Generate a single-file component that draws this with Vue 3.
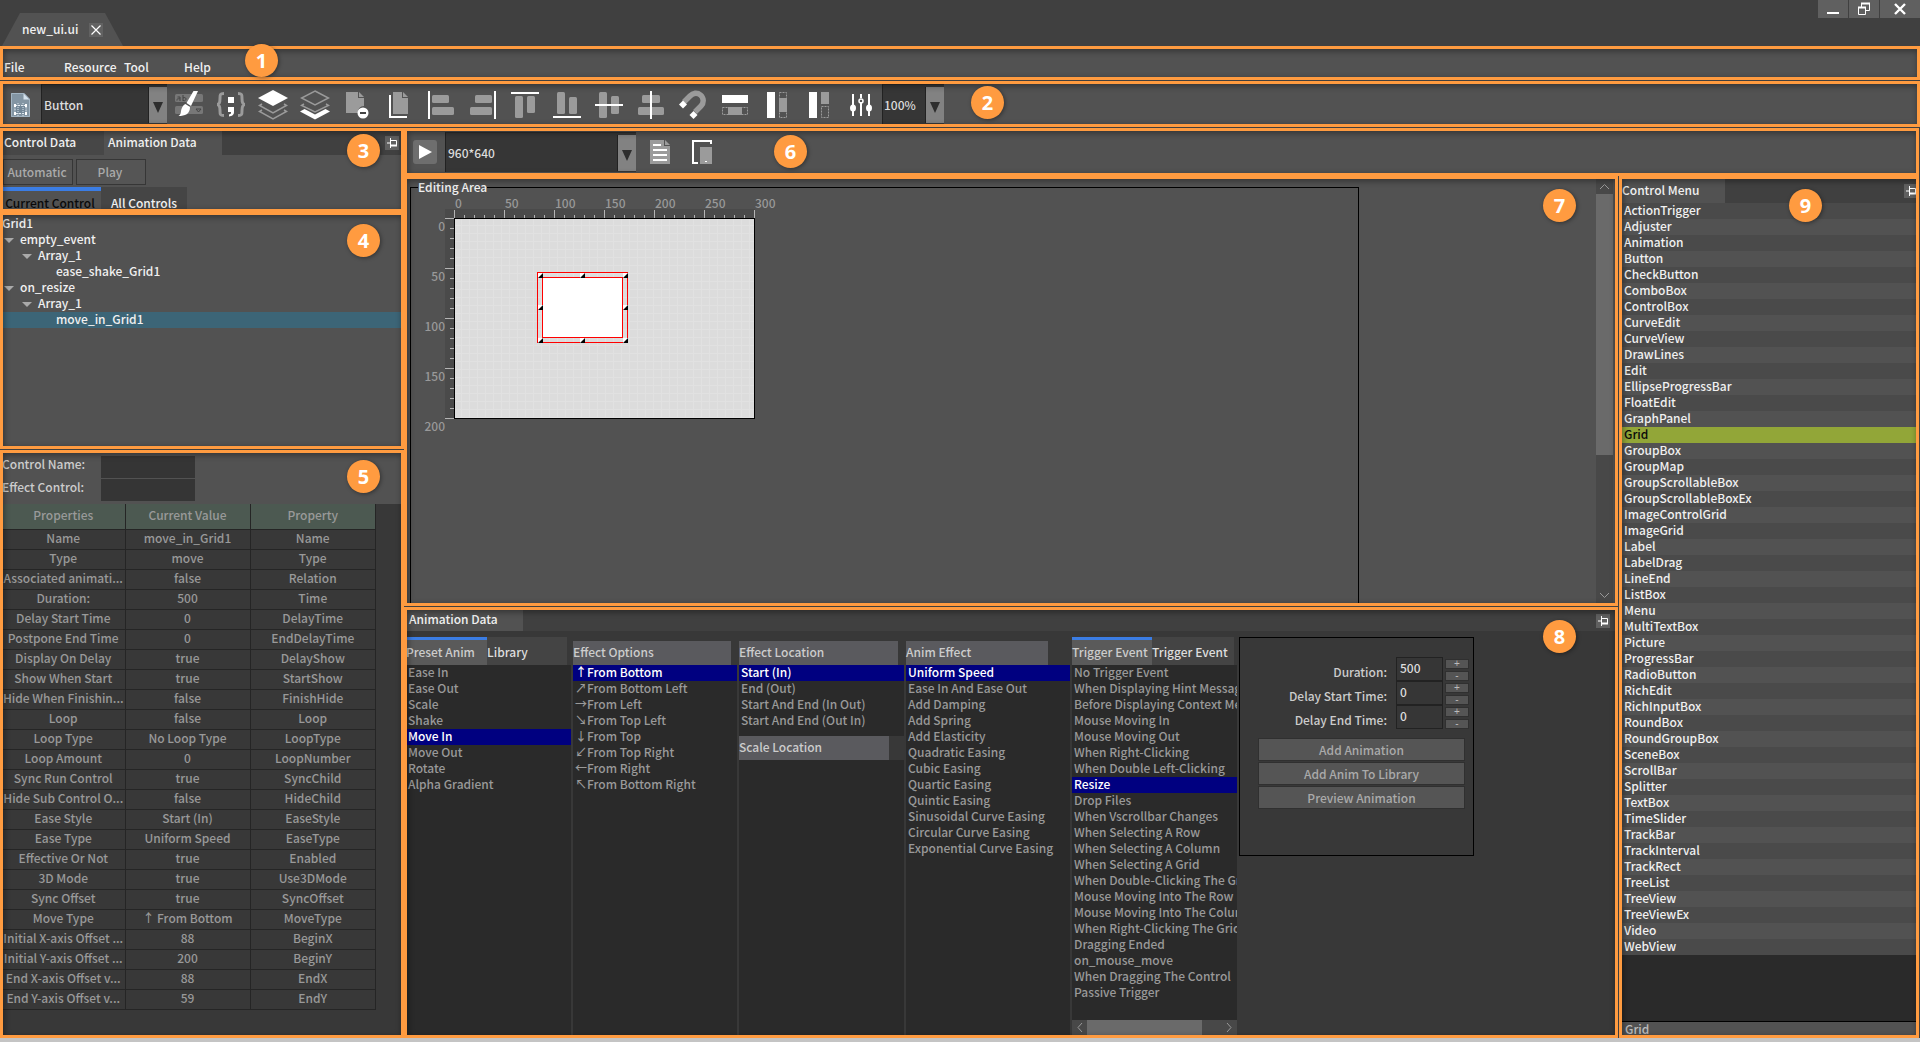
<script setup>
import { ref } from 'vue'

const menus = ['File', 'Resource', 'Tool', 'Help']

const tree = [
  { label: 'Grid1', level: 0 },
  { label: 'empty_event', level: 1, open: true },
  { label: 'Array_1', level: 2, open: true },
  { label: 'ease_shake_Grid1', level: 3 },
  { label: 'on_resize', level: 1, open: true },
  { label: 'Array_1', level: 2, open: true },
  { label: 'move_in_Grid1', level: 3, selected: true }
]

const properties = [
  ['Name', 'move_in_Grid1', 'Name'],
  ['Type', 'move', 'Type'],
  ['Associated animati...', 'false', 'Relation'],
  ['Duration:', '500', 'Time'],
  ['Delay Start Time', '0', 'DelayTime'],
  ['Postpone End Time', '0', 'EndDelayTime'],
  ['Display On Delay', 'true', 'DelayShow'],
  ['Show When Start', 'true', 'StartShow'],
  ['Hide When Finishin...', 'false', 'FinishHide'],
  ['Loop', 'false', 'Loop'],
  ['Loop Type', 'No Loop Type', 'LoopType'],
  ['Loop Amount', '0', 'LoopNumber'],
  ['Sync Run Control', 'true', 'SyncChild'],
  ['Hide Sub Control O...', 'false', 'HideChild'],
  ['Ease Style', 'Start (In)', 'EaseStyle'],
  ['Ease Type', 'Uniform Speed', 'EaseType'],
  ['Effective Or Not', 'true', 'Enabled'],
  ['3D Mode', 'true', 'Use3DMode'],
  ['Sync Offset', 'true', 'SyncOffset'],
  ['Move Type', '↑ From Bottom', 'MoveType'],
  ['Initial X-axis Offset ...', '88', 'BeginX'],
  ['Initial Y-axis Offset ...', '200', 'BeginY'],
  ['End X-axis Offset v...', '88', 'EndX'],
  ['End Y-axis Offset v...', '59', 'EndY']
]

const presets = ['Ease In', 'Ease Out', 'Scale', 'Shake', 'Move In', 'Move Out', 'Rotate', 'Alpha Gradient']
const directions = [
  { arrow: '↑', label: 'From Bottom' },
  { arrow: '↗', label: 'From Bottom Left' },
  { arrow: '→', label: 'From Left' },
  { arrow: '↘', label: 'From Top Left' },
  { arrow: '↓', label: 'From Top' },
  { arrow: '↙', label: 'From Top Right' },
  { arrow: '←', label: 'From Right' },
  { arrow: '↖', label: 'From Bottom Right' }
]
const locations = ['Start (In)', 'End (Out)', 'Start And End (In Out)', 'Start And End (Out In)']
const easings = [
  'Uniform Speed', 'Ease In And Ease Out', 'Add Damping', 'Add Spring', 'Add Elasticity', 'Quadratic Easing',
  'Cubic Easing', 'Quartic Easing', 'Quintic Easing', 'Sinusoidal Curve Easing', 'Circular Curve Easing',
  'Exponential Curve Easing'
]
const triggers = [
  'No Trigger Event', 'When Displaying Hint Message', 'Before Displaying Context Menu', 'Mouse Moving In',
  'Mouse Moving Out', 'When Right-Clicking', 'When Double Left-Clicking', 'Resize', 'Drop Files',
  'When Vscrollbar Changes', 'When Selecting A Row', 'When Selecting A Column', 'When Selecting A Grid',
  'When Double-Clicking The Grid', 'Mouse Moving Into The Row', 'Mouse Moving Into The Column',
  'When Right-Clicking The Grid', 'Dragging Ended', 'on_mouse_move', 'When Dragging The Control',
  'Passive Trigger'
]

const controls = [
  'ActionTrigger', 'Adjuster', 'Animation', 'Button', 'CheckButton', 'ComboBox', 'ControlBox', 'CurveEdit',
  'CurveView', 'DrawLines', 'Edit', 'EllipseProgressBar', 'FloatEdit', 'GraphPanel', 'Grid', 'GroupBox',
  'GroupMap', 'GroupScrollableBox', 'GroupScrollableBoxEx', 'ImageControlGrid', 'ImageGrid', 'Label',
  'LabelDrag', 'LineEnd', 'ListBox', 'Menu', 'MultiTextBox', 'Picture', 'ProgressBar', 'RadioButton',
  'RichEdit', 'RichInputBox', 'RoundBox', 'RoundGroupBox', 'SceneBox', 'ScrollBar', 'Splitter', 'TextBox',
  'TimeSlider', 'TrackBar', 'TrackInterval', 'TrackRect', 'TreeList', 'TreeView', 'TreeViewEx', 'Video',
  'WebView'
]

const preset = ref('Move In')
const direction = ref('From Bottom')
const location = ref('Start (In)')
const easing = ref('Uniform Speed')
const trigger = ref('Resize')
const control = ref('Grid')

const timings = ref([
  { id: 'duration', label: 'Duration:', value: '500' },
  { id: 'delay-start', label: 'Delay Start Time:', value: '0' },
  { id: 'delay-end', label: 'Delay End Time:', value: '0' }
])

// Ruler geometry: one unit is one pixel, a major tick every 50.
const rulerX = Array.from({ length: 31 }, (_, i) => i * 10)
const rulerY = Array.from({ length: 21 }, (_, i) => i * 10)
const handles = [[83, 54], [125, 54], [168, 54], [83, 86], [168, 86], [83, 119], [125, 119], [168, 119]]
</script>

<template>
  <div class="app">
    <header class="titlebar">
      <div class="doc-tab">
        <span>new_ui.ui</span>
        <button class="close-doc" aria-label="Close tab">
          <svg width="14" height="14" viewBox="0 0 14 14"><path d="M2.500 2.500l9 9M11.500 2.500l-9 9" stroke="#fff" stroke-width="1.200" /></svg>
        </button>
      </div>
      <div class="window-buttons">
        <button aria-label="Minimize"><svg width="14" height="14" viewBox="0 0 14 14"><path d="M1 10h12v2H1z" fill="#fff" /></svg></button>
        <button aria-label="Restore"><svg width="14" height="14" viewBox="0 0 14 14" fill="none" stroke="#fff"><path d="M1.500 5.500h7v7h-7zM4.500 5V1.500h8v7H9" /><path d="M1 5.500h8M4 1.500h9" stroke-width="2" /></svg></button>
        <button class="wide" aria-label="Close"><svg width="14" height="14" viewBox="0 0 14 14"><path d="M2 2l10 10M12 2L2 12" stroke="#fff" stroke-width="2.400" /></svg></button>
      </div>
    </header>

    <nav class="frame menubar">
      <a v-for="m in menus" :key="m" href="#">{{ m }}</a>
      <span class="badge b1">1</span>
    </nav>

    <section class="frame toolbar">
      <button class="tool first" aria-label="New from template">
        <svg width="30" height="30" viewBox="0 0 30 30">
          <path d="M6 3h13l6 6v18H6z" fill="#8395a3" /><path d="M18.500 3v6.500H25z" fill="#d5e2ec" /><path d="M6.500 3.500h12.500l5.500 6v17H6.500z" fill="none" stroke="#a3b5c3" />
          <path d="M10 15.500h11v8H10z" fill="#748898" stroke="#e4ebf0" stroke-dasharray="2 1" />
          <path d="M9 14h2v3H9zM20 14h2v3h-2zM9 22h2v3H9zM20 22h2v3h-2z" fill="#fff" /><path d="M13 13v13M18 13v13" stroke="#dce6ee" stroke-dasharray="1 1" />
        </svg>
      </button>
      <div class="combo kind">
        <select aria-label="Control type"><option>Button</option></select>
        <span class="drop" aria-hidden="true"></span>
      </div>
      <button class="tool" aria-label="Format painter">
        <svg width="30" height="30" viewBox="0 0 30 30">
          <rect x="1" y="4" width="28" height="8" rx="1.500" fill="#777" /><rect x="1" y="16" width="28" height="8" rx="1.500" fill="#777" />
          <path d="M3 10.500c-1-2 3-2 3-1.500M3.500 7h2.500v4M9 5v6M9 8c4-2 4 4 0 2.500M22 19h5l-2.500 3z" fill="none" stroke="#444" />
          <path d="M19.500 1h4.500L17 16l-4.500-3z" fill="#fff" /><path d="M11.500 14l4.500 3c0 7-5 9-11.500 9 3-2 2-4 3-7 .7-2 2-4.500 4-5z" fill="#fff" />
        </svg>
      </button>
      <button class="tool" aria-label="Code">
        <svg width="30" height="30" viewBox="0 0 30 30">
          <path d="M8 3.500c-4 0-4 1-4 5 0 4-.5 6-3 6 2.500 0 3 2 3 6 0 4 0 5 4 5M22 3.500c4 0 4 1 4 5 0 4 .5 6 3 6-2.500 0-3 2-3 6 0 4 0 5-4 5" fill="none" stroke="#9b9b9b" stroke-width="3" />
          <path d="M12 7h6v6h-6zM12 17h6v5c0 3-2 4-5 4.500v-2c2-.5 2-1 2-2.500h-3z" fill="#fff" />
        </svg>
      </button>
      <button class="tool" aria-label="Bring to front">
        <svg width="30" height="30" viewBox="0 0 30 30" fill="none" stroke="#9b9b9b" stroke-width="1.500">
          <path d="M4 14L1.500 15.500 15 23l13.500-7.500L26 14M4 20l-2.500 1.500L15 29l13.500-7.500L26 20" /><path d="M15 0l15 8-15 8L0 8z" fill="#fff" stroke="none" />
        </svg>
      </button>
      <button class="tool" aria-label="Send to back">
        <svg width="30" height="30" viewBox="0 0 30 30" fill="none" stroke="#9b9b9b" stroke-width="1.500">
          <path d="M15 1l13.500 7L15 15 1.500 8zM4 14l-2.500 1.500L15 22l13.500-6.500L26 14" /><path d="M0 21.500L4.500 19 15 24.500 25.500 19l4.500 2.500-15 8z" fill="#fff" stroke="none" />
        </svg>
      </button>
      <button class="tool" aria-label="Remove page">
        <svg width="30" height="30" viewBox="0 0 30 30">
          <path d="M4 2h12v6h6v8a6 6 0 0 0-6 7H4z" fill="#9b9b9b" /><path d="M17 2l5 5h-5z" fill="#9b9b9b" />
          <circle cx="21" cy="23" r="5.500" fill="#fff" /><path d="M18 22h6v2h-6z" fill="#444" />
        </svg>
      </button>
      <button class="tool" aria-label="Copy pages">
        <svg width="30" height="30" viewBox="0 0 30 30">
          <path d="M9 2h9v6h6v16H9z" fill="#9b9b9b" /><path d="M19 2l5 5h-5z" fill="#9b9b9b" /><path d="M6 5v22h17" fill="none" stroke="#fff" stroke-width="2" />
        </svg>
      </button>
      <button class="tool" aria-label="Align left">
        <svg width="30" height="30" viewBox="0 0 30 30"><path d="M2 1h2v28H2z" fill="#fff" /><rect x="6" y="5" width="17" height="8" rx="1.500" fill="#9b9b9b" /><rect x="6" y="17" width="22" height="8" rx="1.500" fill="#9b9b9b" /></svg>
      </button>
      <button class="tool" aria-label="Align right">
        <svg width="30" height="30" viewBox="0 0 30 30"><path d="M26 1h2v28h-2z" fill="#fff" /><rect x="7" y="5" width="17" height="8" rx="1.500" fill="#9b9b9b" /><rect x="2" y="17" width="22" height="8" rx="1.500" fill="#9b9b9b" /></svg>
      </button>
      <button class="tool" aria-label="Align top">
        <svg width="30" height="30" viewBox="0 0 30 30"><path d="M1 2h28v2H1z" fill="#fff" /><rect x="5" y="6" width="8" height="22" rx="1.500" fill="#9b9b9b" /><rect x="17" y="6" width="8" height="17" rx="1.500" fill="#9b9b9b" /></svg>
      </button>
      <button class="tool" aria-label="Align bottom">
        <svg width="30" height="30" viewBox="0 0 30 30"><path d="M1 26h28v2H1z" fill="#fff" /><rect x="5" y="2" width="8" height="22" rx="1.500" fill="#9b9b9b" /><rect x="17" y="7" width="8" height="17" rx="1.500" fill="#9b9b9b" /></svg>
      </button>
      <button class="tool" aria-label="Align middle">
        <svg width="30" height="30" viewBox="0 0 30 30"><rect x="5" y="2" width="8" height="26" rx="1.500" fill="#9b9b9b" /><rect x="17" y="6" width="8" height="18" rx="1.500" fill="#9b9b9b" /><path d="M1 14h28v2H1z" fill="#fff" /></svg>
      </button>
      <button class="tool" aria-label="Align center">
        <svg width="30" height="30" viewBox="0 0 30 30"><rect x="6" y="5" width="18" height="8" rx="1.500" fill="#9b9b9b" /><rect x="2" y="17" width="26" height="8" rx="1.500" fill="#9b9b9b" /><path d="M14 1h2v28h-2z" fill="#fff" /></svg>
      </button>
      <button class="tool" aria-label="Snap">
        <svg width="30" height="30" viewBox="0 0 30 30">
          <path d="M6 12l6-6c3-3 7-4 10.500-1s3.500 8 .5 11l-6 6" fill="none" stroke="#9b9b9b" stroke-width="5.500" />
          <path d="M5 10.500l4 4-4 4-4-4zM15.500 21l4 4-4 4-4-4z" fill="#fff" />
        </svg>
      </button>
      <button class="tool" aria-label="Same width">
        <svg width="30" height="30" viewBox="0 0 30 30"><path d="M2 5h26v8H2z" fill="#fff" /><path d="M2.500 17.500h25v7h-25z" fill="none" stroke="#9b9b9b" stroke-dasharray="2 1" /><path d="M8 17h14v8H8z" fill="#9b9b9b" /></svg>
      </button>
      <button class="tool" aria-label="Same height">
        <svg width="30" height="30" viewBox="0 0 30 30"><path d="M5 2h8v26H5z" fill="#fff" /><path d="M17.500 2.500h7v25h-7z" fill="none" stroke="#9b9b9b" stroke-dasharray="2 1" /><path d="M17 8h8v14h-8z" fill="#9b9b9b" /></svg>
      </button>
      <button class="tool" aria-label="Match height from top">
        <svg width="30" height="30" viewBox="0 0 30 30"><path d="M5 2h8v26H5z" fill="#fff" /><path d="M17 2h8v12h-8z" fill="#9b9b9b" /><path d="M17.500 16.500h7v11h-7z" fill="none" stroke="#9b9b9b" stroke-dasharray="2 1" /></svg>
      </button>
      <button class="tool" aria-label="Settings">
        <svg width="30" height="30" viewBox="0 0 30 30" fill="none" stroke="#fff">
          <path d="M7 4v22M15 12v14M15 4v4M23 4v22" stroke-width="2" /><circle cx="15" cy="11" r="2" stroke-width="1.500" /><ellipse cx="7" cy="18" rx="3" ry="3.500" fill="#fff" stroke="none" /><ellipse cx="23" cy="18" rx="3" ry="3.500" fill="#fff" stroke="none" />
        </svg>
      </button>
      <div class="combo zoom">
        <select aria-label="Zoom"><option>100%</option></select>
        <span class="drop" aria-hidden="true"></span>
      </div>
      <span class="badge b2">2</span>
    </section>

    <div class="work">
      <aside class="left">
        <section class="frame data">
          <div class="tabs">
            <button class="tab t-control">Control Data</button>
            <button class="tab t-anim on">Animation Data</button>
            <button class="pin" aria-label="Pin"><svg width="14" height="14" viewBox="0 0 14 14" fill="none" stroke="#fff"><path d="M2 7h3M5.500 2v10M5.500 4.500h6v5" /><path d="M5 9.500h7" stroke-width="2" /></svg></button>
          </div>
          <div class="actions">
            <button>Automatic</button>
            <button>Play</button>
          </div>
          <div class="subtabs">
            <button class="current">Current Control</button>
            <button>All Controls</button>
          </div>
          <span class="badge b3">3</span>
        </section>

        <section class="frame tree">
          <ul>
            <li v-for="(n, i) in tree" :key="i" :class="['level' + n.level, { selected: n.selected }]">
              <i v-if="n.open" class="caret"></i>{{ n.label }}
            </li>
          </ul>
          <span class="badge b4">4</span>
        </section>

        <section class="frame props">
          <div class="fields">
            <label for="control-name">Control Name:</label><input id="control-name" type="text" />
            <label for="effect-control">Effect Control:</label><input id="effect-control" type="text" />
          </div>
          <div class="table-area">
            <table>
              <thead><tr><th class="c1">Properties</th><th class="c2">Current Value</th><th>Property</th></tr></thead>
              <tbody>
                <tr v-for="p in properties" :key="p[2]"><td v-for="(c, i) in p" :key="i">{{ c }}</td></tr>
              </tbody>
            </table>
          </div>
          <span class="badge b5">5</span>
        </section>
      </aside>

      <div class="right">
        <section class="frame device">
          <button class="play" aria-label="Run"><svg width="24" height="24" viewBox="0 0 24 24"><path d="M6 5l13 7-13 7z" fill="#fff" /></svg></button>
          <div class="combo size">
            <select aria-label="Resolution"><option>960*640</option></select>
            <span class="drop" aria-hidden="true"></span>
          </div>
          <button class="tool" aria-label="Document">
            <svg width="30" height="30" viewBox="0 0 30 30"><path d="M5 3h14v6h6v18H5z" fill="#9b9b9b" /><path d="M20 3l5 5h-5z" fill="#9b9b9b" /><path d="M8 8h8M8 13h14M8 18h14M8 23h14" stroke="#fff" stroke-width="2" /></svg>
          </button>
          <button class="tool" aria-label="Devices">
            <svg width="30" height="30" viewBox="0 0 30 30"><path d="M24 7V4H6v22h5" fill="none" stroke="#fff" stroke-width="2" /><path d="M13 10h12v17H13z" fill="#9b9b9b" /><path d="M18 24h2v1h-2z" fill="#fff" /></svg>
          </button>
          <span class="badge b6">6</span>
        </section>

        <div class="columns">
          <main class="center">
            <section class="frame editor">
              <fieldset>
                <legend>Editing Area</legend>
                <svg class="stage" width="400" height="250" viewBox="-42 -23 400 250">
                  <defs>
                    <pattern id="dots" width="8" height="8" patternUnits="userSpaceOnUse"><path d="M0 0h8v8H0z" fill="#dcdcdc" /><path d="M7.500 0v8M0 7.500h8" stroke="#e1e1e1" /></pattern>
                  </defs>
                  <path d="M-9-9h310v9H-9zM-9-9h9v210h-9z" fill="#4a4a4a" />
                  <g stroke="#b4b4b4">
                    <line v-for="x in rulerX" :key="'x' + x" :x1="x + 0.5" :x2="x + 0.5" :y1="x % 50 ? -3 : -8" y2="0" />
                    <line v-for="y in rulerY" :key="'y' + y" :y1="y + 0.5" :y2="y + 0.5" :x1="y % 50 ? -4 : -9" x2="0" />
                  </g>
                  <g class="ticks">
                    <template v-for="x in rulerX"><text v-if="x % 50 === 0" :key="'tx' + x" :x="x + 1" y="-10">{{ x }}</text></template>
                    <template v-for="y in rulerY"><text v-if="y % 50 === 0" :key="'ty' + y" x="-9" :y="y + 13" text-anchor="end">{{ y }}</text></template>
                  </g>
                  <rect x="0.500" y="0.500" width="300" height="200" fill="url(#dots)" stroke="#000" />
                  <rect x="83.500" y="54.500" width="90" height="70" fill="none" stroke="#f00" />
                  <rect x="88.500" y="59.500" width="80" height="60" fill="#fff" stroke="#f00" />
                  <g v-for="(h, i) in handles" :key="i" :transform="`translate(${h[0]} ${h[1]})`">
                    <path d="M1 1h5v5H1z" fill="#fff" /><path d="M6 1v5H1z" fill="#000" />
                  </g>
                </svg>
              </fieldset>
              <div class="vscroll" aria-hidden="true">
                <svg width="17" height="15" viewBox="0 0 17 15"><path d="M4 10l4.500-4.500L13 10" fill="none" stroke="#999" /></svg>
                <div class="vthumb"></div>
                <svg width="17" height="15" viewBox="0 0 17 15"><path d="M4 5l4.500 4.500L13 5" fill="none" stroke="#999" /></svg>
              </div>
              <span class="badge b7">7</span>
            </section>

            <section class="frame anim">
              <div class="tabs">
                <button class="tab t-data on">Animation Data</button>
                <button class="pin" aria-label="Pin"><svg width="14" height="14" viewBox="0 0 14 14" fill="none" stroke="#fff"><path d="M2 7h3M5.500 2v10M5.500 4.500h6v5" /><path d="M5 9.500h7" stroke-width="2" /></svg></button>
              </div>
              <div class="anim-body">
                <div class="col">
                  <div class="coltabs"><button class="current w81">Preset Anim</button><button class="w80">Library</button></div>
                  <ul class="list">
                    <li v-for="p in presets" :key="p" :class="{ on: p === preset }" @click="preset = p">{{ p }}</li>
                  </ul>
                </div>
                <div class="col">
                  <h3>Effect Options</h3>
                  <ul class="list">
                    <li v-for="d in directions" :key="d.label" :class="{ on: d.label === direction }" @click="direction = d.label"><span class="dir">{{ d.arrow }}</span>{{ d.label }}</li>
                  </ul>
                </div>
                <div class="col">
                  <h3>Effect Location</h3>
                  <ul class="list short">
                    <li v-for="l in locations" :key="l" :class="{ on: l === location }" @click="location = l">{{ l }}</li>
                  </ul>
                  <h3 class="second">Scale Location</h3>
                  <ul class="list"></ul>
                </div>
                <div class="col">
                  <h3 class="narrow">Anim Effect</h3>
                  <ul class="list">
                    <li v-for="e in easings" :key="e" :class="{ on: e === easing }" @click="easing = e">{{ e }}</li>
                  </ul>
                </div>
                <div class="col">
                  <div class="coltabs"><button class="current w80">Trigger Event</button><button class="w82">Trigger Event</button></div>
                  <ul class="list">
                    <li v-for="t in triggers" :key="t" :class="{ on: t === trigger }" @click="trigger = t">{{ t }}</li>
                  </ul>
                  <div class="hscroll" aria-hidden="true">
                    <svg width="15" height="15" viewBox="0 0 15 15"><path d="M10 3L6 7.500l4 4.500" fill="none" stroke="#999" /></svg>
                    <div class="hthumb"></div>
                    <svg width="15" height="15" viewBox="0 0 15 15"><path d="M5 3l4 4.500L5 12" fill="none" stroke="#999" /></svg>
                  </div>
                </div>
                <form class="timing" @submit.prevent>
                  <div v-for="t in timings" :key="t.id" class="row">
                    <label :for="t.id">{{ t.label }}</label>
                    <input :id="t.id" v-model="t.value" type="text" />
                    <div class="spin">
                      <button type="button" :aria-label="'Increase ' + t.label">+</button>
                      <button type="button" :aria-label="'Decrease ' + t.label">-</button>
                    </div>
                  </div>
                  <div class="commands">
                    <button type="button">Add Animation</button>
                    <button type="button">Add Anim To Library</button>
                    <button type="button">Preview Animation</button>
                  </div>
                </form>
              </div>
              <span class="badge b8">8</span>
            </section>
          </main>

          <aside class="frame palette">
            <div class="tabs">
              <button class="tab t-menu on">Control Menu</button>
              <button class="pin" aria-label="Pin"><svg width="14" height="14" viewBox="0 0 14 14" fill="none" stroke="#fff"><path d="M2 7h3M5.500 2v10M5.500 4.500h6v5" /><path d="M5 9.500h7" stroke-width="2" /></svg></button>
            </div>
            <ul>
              <li v-for="c in controls" :key="c" :class="{ on: c === control }" @click="control = c">{{ c }}</li>
            </ul>
            <div class="status">{{ control }}</div>
            <span class="badge b9">9</span>
          </aside>
        </div>
      </div>
    </div>
  </div>
</template>

<style>
body {
  background: #c4c4c4;
}
</style>

<style scoped>
.app {
  display: flex;
  flex-direction: column;
  min-height: 100vh;
  background: #404040;
  font: 500 12px/16px "Noto Sans CJK SC", sans-serif;
  color: #f0f0f0;
  white-space: nowrap;
}
.app * {
  box-sizing: border-box;
}
button,
input,
select {
  margin: 0;
  padding: 0;
  border: 0;
  border-radius: 0;
  background: none;
  font: inherit;
  color: inherit;
}
ul {
  margin: 0;
  padding: 0;
  list-style: none;
}
li {
  height: 16px;
  line-height: 14px;
}
svg {
  display: block;
}

/* highlighted regions */
.frame {
  position: relative;
  padding: 3px;
  background: #525252;
}
.frame::after {
  content: "";
  position: absolute;
  inset: 0;
  z-index: 2;
  border: 3px solid #ff9b40;
  box-shadow: inset 1px 2px 6px rgba(0, 0, 0, 0.4);
  pointer-events: none;
}
.badge {
  position: absolute;
  z-index: 3;
  width: 33px;
  height: 33px;
  border-radius: 50%;
  background: #ff9b40;
  box-shadow: 1px 1px 4px rgba(0, 0, 0, 0.4);
  color: #fff;
  font: 700 20px/33px "Noto Sans", sans-serif;
  text-align: center;
}
.b1 { left: 245px; top: -2px; }
.b2 { left: 971px; top: 5px; }
.b3 { left: 347px; top: 6px; }
.b4 { left: 347px; top: 12px; }
.b5 { left: 347px; top: 10px; }
.b6 { left: 370px; top: 7px; }
.b7 { right: 42px; top: 13px; }
.b8 { right: 42px; top: 13px; }
.b9 { left: 170px; top: 13px; }

/* title bar */
.titlebar {
  display: flex;
  justify-content: space-between;
  align-items: flex-end;
  height: 46px;
}
.doc-tab {
  display: flex;
  align-items: center;
  gap: 11px;
  width: 121px;
  height: 33px;
  margin-left: 2px;
  padding-left: 20px;
  background: #525252;
  clip-path: polygon(18px 0, 103px 0, 100% 100%, 0 100%);
}
.doc-tab span {
  padding-bottom: 2px;
}
.close-doc {
  background: #626262;
}
.window-buttons {
  display: flex;
  align-self: flex-start;
  gap: 1px;
}
.window-buttons button {
  display: grid;
  place-items: center;
  width: 30px;
  height: 18px;
  background: #606060;
}
.window-buttons .wide {
  width: 40px;
}

/* menu and tools */
.menubar {
  display: flex;
  align-items: flex-end;
  height: 34px;
  padding: 0 4px 5px;
}
.menubar a {
  width: 60px;
  color: inherit;
  text-decoration: none;
}
.toolbar {
  display: flex;
  height: 46px;
  margin-top: 1px;
  padding-left: 0;
}
.tool {
  display: grid;
  place-items: center;
  width: 42px;
  height: 40px;
}
.toolbar .tool {
  padding-top: 2px;
}
.toolbar .first {
  width: 41px;
  padding-right: 2px;
}
.combo {
  display: flex;
  height: 40px;
  border-left: 1px solid #222;
  border-top: 1px solid #2c2c2c;
  background: #363636;
  color: #ddd;
}
.combo select {
  flex: 1;
  appearance: none;
  padding-left: 2px;
}
.combo option {
  color: #000;
}
.combo .drop {
  display: grid;
  place-items: center;
  width: 19px;
  margin: 2px 0 1px;
  border-left: 1px solid #222;
  background: #828282;
}
.drop::before {
  content: "";
  margin-top: 4px;
  border: 5px solid transparent;
  border-top: 11px solid #2e2e2e;
  border-bottom: 0;
}
.kind {
  width: 126px;
  margin-right: 1px;
}
.zoom {
  width: 62px;
}
.zoom select {
  padding-left: 1px;
}

/* workspace */
.work {
  display: flex;
  flex: 1;
  margin-top: 1px;
  border-bottom: 4px solid #c4c4c4;
}
.left {
  display: flex;
  flex-direction: column;
  width: 404px;
}
.tabs {
  display: flex;
  height: 24px;
  background: #404040;
}
.tab {
  padding: 0 0 3px 1px;
  text-align: left;
  background: #474747;
}
.tab.on {
  background: #525252;
}
.t-control {
  width: 101px;
}
.t-anim {
  width: 118px;
  padding-left: 4px;
}
.pin {
  align-self: center;
  margin-left: auto;
  margin-right: 2px;
  background: #606060;
}
.data {
  height: 84px;
}
.actions {
  display: flex;
  gap: 3px;
  padding: 4px 0 2px;
}
.actions button {
  width: 70px;
  height: 26px;
  padding-right: 2px;
  border: 1px solid #363636;
  background: #555;
  color: #aaa;
}
.subtabs {
  display: flex;
  height: 23px;
}
.subtabs button {
  width: 86px;
  padding-top: 8px;
  background: #454545;
}
.subtabs .current {
  width: 98px;
  padding: 4px 4px 0 0;
  border-top: 4px solid #3b7de4;
  background: #525252;
  color: #0a0a0a;
}
.tree {
  height: 237px;
  padding: 4px 3px 3px 2px;
}
.tree li {
  display: flex;
  align-items: flex-start;
}
.tree .selected {
  background: #3c6577;
}
.level1 { padding-left: 2px; }
.level2 { padding-left: 20px; }
.level3 { padding-left: 54px; }
.caret {
  margin: 6px 6px 0 0;
  border: 5px solid transparent;
  border-top-color: #aaa;
  border-bottom: 0;
}
.props {
  display: flex;
  flex: 1;
  flex-direction: column;
  margin-top: 1px;
  padding-left: 2px;
}
.fields {
  display: grid;
  grid-template-columns: 99px 94px;
  grid-auto-rows: 22px;
  row-gap: 1px;
  padding: 3px 0;
  color: #ccc;
}
.fields label {
  line-height: 16px;
}
.fields input {
  background: #353535;
}
.table-area {
  flex: 1;
  background: #383838;
}
table {
  width: 374px;
  border-collapse: collapse;
  table-layout: fixed;
  color: #999;
}
th,
td {
  height: 20px;
  padding: 0 0 2px;
  border-right: 1px solid #252525;
  border-bottom: 1px solid #252525;
  font-weight: 500;
  text-align: center;
  line-height: 16px;
}
th {
  height: 25px;
  background: #4c5951;
}
.c1 {
  width: 123px;
}
.c2 {
  width: 125px;
}
.right {
  display: flex;
  flex: 1;
  flex-direction: column;
  min-width: 0;
}
.device {
  display: flex;
  align-items: center;
  height: 48px;
  margin-right: 1px;
}
.play {
  margin: 0 8px 0 6px;
  border-radius: 3px;
  background: #6e6e6e;
}
.size {
  width: 191px;
}
.size + .tool {
  margin-left: 3px;
}
.columns {
  display: flex;
  flex: 1;
}
.center {
  display: flex;
  flex: 1;
  flex-direction: column;
  min-width: 0;
}
.editor {
  display: flex;
  justify-content: space-between;
  height: 430px;
}
fieldset {
  width: 949px;
  margin: 0 0 0 3px;
  padding: 0 0 0 1px;
  border: 1px solid #000;
  border-bottom: 0;
}
legend {
  margin-left: 6px;
  padding: 0;
}
.stage {
  overflow: visible;
}
.ticks {
  fill: #999;
}
.vscroll {
  display: flex;
  flex-direction: column;
  justify-content: space-between;
  width: 17px;
  margin-right: 2px;
  background: #484848;
}
.vthumb {
  height: 261px;
  margin-bottom: auto;
  background: #6a6a6a;
}
.anim {
  display: flex;
  flex: 1;
  flex-direction: column;
  margin-top: 1px;
  padding-left: 2px;
  background: #383838;
}
.anim .tabs {
  height: 21px;
}
.anim .pin {
  margin-right: 5px;
}
.t-data {
  width: 117px;
  padding: 0 0 4px 3px;
}
.anim-body {
  display: flex;
  flex: 1;
  gap: 2px;
  padding-top: 6px;
}
.col {
  display: flex;
  flex-direction: column;
  width: 165px;
}
.col:nth-child(even) {
  width: 164px;
}
.col h3 {
  height: 24px;
  margin: 4px 6px 0 0;
  background: #5a5a5e;
  color: #ccc;
  font: inherit;
  line-height: 22px;
}
.col h3.narrow {
  width: 142px;
}
.col h3.second {
  width: 150px;
  margin-top: 0;
}
.coltabs {
  display: flex;
  height: 28px;
  color: #ddd;
}
.coltabs button {
  padding-top: 2px;
  background: #444;
  text-align: left;
}
.coltabs .current {
  padding: 0 0 1px;
  border-top: 3px solid #3b7de4;
  background: #5a5a5a;
  color: #ccc;
}
.w80 { width: 80px; }
.w81 { width: 81px; }
.w82 { width: 82px; }
.list {
  flex: 1;
  overflow: hidden;
  background: #2a2a2a;
  color: #999;
}
.list.short {
  flex: none;
  height: 71px;
}
.list li {
  padding-left: 2px;
}
.list .on {
  background: #000080;
  color: #fff;
}
.dir {
  display: inline-block;
  width: 12px;
}
.hscroll {
  display: flex;
  justify-content: space-between;
  height: 15px;
  background: #484848;
}
.hthumb {
  width: 115px;
  margin-right: auto;
  background: #6a6a6a;
}
.timing {
  width: 235px;
  height: 219px;
  padding: 19px 4px 0;
  border: 1px solid #000;
}
.timing .row {
  display: flex;
  align-items: stretch;
  justify-content: flex-end;
  height: 24px;
}
.timing label {
  margin-right: 9px;
  color: #ccc;
  line-height: 30px;
}
.timing input {
  width: 47px;
  padding: 0 0 3px 3px;
  border: 1px solid #222;
  background: #363636;
  color: #ddd;
}
.spin {
  display: flex;
  flex-direction: column;
  gap: 2px;
  padding: 2px 0 0 2px;
}
.spin button {
  width: 24px;
  height: 10px;
  border: 1px solid #303030;
  background: #555;
  color: #bbb;
  font: 10px/8px "Liberation Sans", sans-serif;
}
.commands {
  display: flex;
  flex-direction: column;
  gap: 1px;
  padding: 9px 4px 0 14px;
}
.commands button {
  height: 23px;
  border: 1px solid #303030;
  background: #555;
  color: #aaa;
}

/* control palette */
.palette {
  display: flex;
  flex-direction: column;
  width: 300px;
  margin: 0 1px;
  background: #2a2a2a;
}
.t-menu {
  width: 103px;
  padding-left: 0;
}
.palette .pin {
  margin-right: -2px;
}
.palette li {
  padding-left: 2px;
  background: #4a4a4a;
}
.palette li:nth-child(even) {
  background: #525252;
}
.palette li.on {
  background: #92a638;
  color: #0a0a0a;
}
.status {
  height: 14px;
  margin-top: auto;
  padding-left: 3px;
  border-top: 1px solid #000;
  background: #525252;
  color: #bbb;
  line-height: 14px;
}
</style>
